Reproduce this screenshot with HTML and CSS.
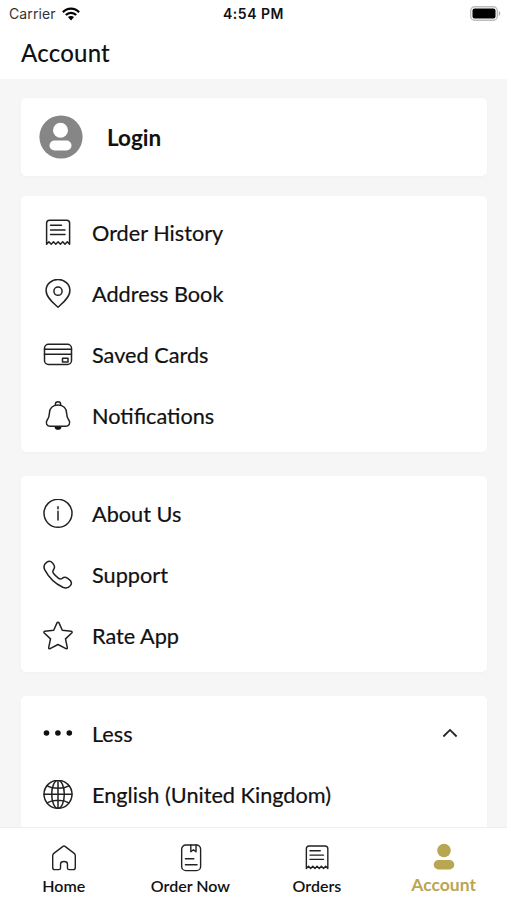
FILE: index.html
```html
<!DOCTYPE html>
<html lang="en">
<head>
<meta charset="utf-8">
<title>Account</title>
<link rel="stylesheet" href="styles.css">
</head>
<body>
<svg class="defs" width="0" height="0">
  <symbol id="receipt" viewBox="0 0 30 30">
    <path d="M3.600 26.200V5.200a3 3 0 0 1 3-3h17a3 3 0 0 1 3 3v21l-2.300-2.500-2.300 2.500-2.300-2.500-2.300 2.500-2.300-2.500-2.300 2.500-2.300-2.500-2.300 2.500-2.300-2.500z"/>
    <path d="M7.500 7.300h11M7.500 11.900h14.500M7.500 16.500h14.500"/>
  </symbol>
</svg>
<div class="screen">
  <header>
    <div class="status">
      <div class="carrier"><span>Carrier</span>
        <svg width="18" height="14" viewBox="0 0 18 14"><path fill="none" stroke="#000" stroke-width="2.2" d="M.9 5.2C5.4.5 12.6.5 17.1 5.2M3.8 8.1c2.9-3 7.5-3 10.4 0"/><path d="M5.9 10.1c1.7-1.6 4.5-1.6 6.2 0L9 13.500z"/></svg>
      </div>
      <div class="time">4:54 PM</div>
      <svg class="battery" width="31" height="15" viewBox="0 0 31 15"><rect x=".7" y=".7" width="26.6" height="13.6" rx="4" fill="#fff" stroke="#bbb" stroke-width="1.4"/><rect x="2.5" y="2.5" width="23" height="10" rx="2"/><path d="M28.8 5c2 1 2 4 0 5z" fill="#aaa"/></svg>
    </div>
    <h1>Account</h1>
  </header>
  <main>
    <section class="card login">
      <svg width="44" height="44" viewBox="0 0 44 44"><circle cx="22" cy="22" r="21.6" fill="#868686"/><g fill="#fff"><circle cx="21.5" cy="15.2" r="7.5"/><rect x="10.5" y="25.5" width="22" height="10" rx="5"/></g></svg>
      <span>Login</span>
    </section>
    <section class="card main-list">
      <div class="row"><svg class="icon"><use href="#receipt"/></svg><span>Order History</span></div>
      <div class="row"><svg class="icon" viewBox="0 0 30 30"><path d="M15 28.300C10 23.800 3.100 18.200 3.100 11.400a11.900 11 0 0 1 23.800 0C26.900 18.200 20 23.800 15 28.300z"/><circle cx="15" cy="12.200" r="4.100"/></svg><span>Address Book</span></div>
      <div class="row"><svg class="icon" viewBox="0 0 30 30"><rect x="1.500" y="4.300" width="27" height="20.200" rx="4"/><path d="M1.500 9.300h27M1.500 14.300h27M19.500 18.300h5.500v3.700h-5.500z"/></svg><span>Saved Cards</span></div>
      <div class="row"><svg class="icon" viewBox="0 0 30 30"><path d="M12.400 4.300V3.100c0-3 5.200-3 5.200 0v1.200"/><path d="M15 4c-5.400 0-8.500 3.500-8.600 8.300 0 3-.7 4.700-2.300 7-2.100 3 .1 6 3.200 6h15.400c3.100 0 5.300-3 3.200-6-1.600-2.300-2.300-4-2.300-7C23.500 7.500 20.400 4 15 4z"/><path class="solid" d="M11.500 26h7c-.3 3.800-6.700 3.800-7 0z"/></svg><span>Notifications</span></div>
    </section>
    <section class="card about-list">
      <div class="row"><svg class="icon" viewBox="0 0 30 30"><circle cx="15" cy="14.300" r="14"/><path d="M15 12.300v8.800M15 7.800v2"/></svg><span>About Us</span></div>
      <div class="row"><svg class="icon" viewBox="0 0 30 30"><path d="M3.600 2.300c2.300-1.700 4.500-1.100 5.900.6l1.200 1.700c1.200 1.800 1 3.500-.2 5.100-1 1.400-1 2.400.1 3.800 1.400 1.800 3 3.300 4.800 4.700 1.400 1.100 2.400 1.100 3.800.1 1.600-1.200 3.300-1.400 5.100-.2l2 1.500c2.200 1.700 2.800 4 1.100 6-1.900 2.500-4.700 2.900-7.600 1.700C12.600 23.900 5.700 17.300 1.800 9.900.4 7 .9 4.200 3.600 2.300z"/></svg><span>Support</span></div>
      <div class="row"><svg class="icon" viewBox="0 0 30 30"><path d="M14 1.900c.4-.9 1.600-.9 2 0l3.300 7.400 8.900 1c1 .2 1.200 1 .5 1.700l-6.200 5.900 1.800 8.800c.2.900-.6 1.400-1.400 1L15 23.500l-7.900 4.200c-.8.400-1.600-.1-1.400-1l1.800-8.800L1.300 12c-.7-.7-.5-1.500.5-1.700l8.900-1z"/></svg><span>Rate App</span></div>
    </section>
    <section class="card more-list">
      <div class="row"><svg class="icon" viewBox="0 0 30 30"><g class="solid"><circle cx="3.500" cy="14" r="2.800"/><circle cx="14.900" cy="14" r="2.800"/><circle cx="26.300" cy="14" r="2.800"/></g></svg><span>Less</span>
        <svg class="chevron" width="16" height="10" viewBox="0 0 16 10"><path d="M1.400 8.500 8 1.900l6.600 6.600"/></svg></div>
      <div class="row"><svg class="icon" viewBox="0 0 30 30"><circle cx="15" cy="14.300" r="14"/><ellipse cx="15" cy="14.300" rx="6.300" ry="14"/><path d="M15 .3v28M1 14.300h28M4 5.800c6 3.300 16 3.300 22 0M4 22.800c6-3.300 16-3.300 22 0"/></svg><span>English (United Kingdom)</span></div>
    </section>
  </main>
  <nav>
    <div class="tab"><svg class="icon" viewBox="0 0 30 30"><path d="M2.900 12.300c0-1 .4-1.700 1.200-2.300l9.800-7.500c.7-.5 1.500-.5 2.200 0l9.800 7.500c.8.600 1.200 1.300 1.200 2.300v12.800c0 1.600-.8 2.400-2.400 2.400h-4.200c-1.200 0-1.800-.6-1.800-1.800v-4.400c0-3.300-7.400-3.300-7.400 0v4.400c0 1.200-.6 1.800-1.800 1.800H5.300c-1.600 0-2.400-.8-2.400-2.400z"/></svg><span>Home</span></div>
    <div class="tab"><svg class="icon" viewBox="0 0 30 30"><rect x="5" y="1" width="20.300" height="27.500" rx="4.500"/><path d="M14.800 1v7.300l2.800-2.100 2.800 2.100V1M9 15.800h9M9 22.300h12.500"/></svg><span>Order Now</span></div>
    <div class="tab"><svg class="icon"><use href="#receipt"/></svg><span>Orders</span></div>
    <div class="tab active"><svg width="22" height="28" viewBox="0 0 22 28"><circle cx="11" cy="7.500" r="6.800"/><rect x=".7" y="17" width="20.600" height="9.500" rx="4.750"/></svg><span>Account</span></div>
  </nav>
</div>
</body>
</html>
```

FILE: styles.css
```css
* { box-sizing: border-box; }
body { margin: 0; font-family: Lato, sans-serif; color: #111; }
.defs { display: block; }
.screen { height: 900px; display: flex; flex-direction: column; overflow: hidden; background: #f6f6f6; }
header { height: 79px; flex: none; background: #fff; }
.status { height: 28px; padding: 0 6px 0 9px; display: grid; grid-template-columns: 1fr auto 1fr; align-items: center; font: 14px/28px Inter, sans-serif; }
.carrier { display: flex; align-items: center; gap: 6px; color: #333; letter-spacing: .12px; }
.carrier svg { margin-top: -1px; }
.time { font-weight: 600; font-size: 14px; letter-spacing: .5px; margin-right: 3px; }
.battery { justify-self: end; margin-top: -1px; }
h1 { margin: 8px 0 0 21px; font-size: 24px; line-height: 34px; font-weight: 500; letter-spacing: .2px; }
main { flex: 1; min-height: 0; overflow: hidden; padding: 19px 20px 0 21px; }
.card { background: #fff; border-radius: 5px; box-shadow: 0 1px 4px rgba(0,0,0,.025); }
.login { height: 78px; display: flex; align-items: center; padding-left: 18px; gap: 24px; font-size: 22.500px; font-weight: 700; margin-bottom: 20px; }
.row { height: 61px; padding: 0 29px 0 22px; display: flex; align-items: center; font-size: 21.700px; line-height: 26px; font-weight: 400; }
.row span { margin-left: 19px; flex: 1; -webkit-text-stroke: .2px #111; }
.icon { width: 30px; height: 30px; flex: none; fill: none; stroke: #222; stroke-width: 1.500; stroke-linejoin: round; stroke-linecap: round; }
.solid { fill: #111; stroke: none; }
.main-list { height: 256px; padding-top: 6px; margin-bottom: 24px; }
.about-list { height: 196px; padding-top: 7px; margin-bottom: 24px; }
.more-list { height: 140px; padding-top: 7px; }
.chevron { fill: none; stroke: #222; stroke-width: 1.800; margin-top: -1px; }
nav { height: 73px; flex: none; padding-left: 1px; display: grid; grid-template-columns: repeat(4, 126.600px); background: #fff; border-top: 1px solid #eee; }
.tab { display: flex; flex-direction: column; align-items: center; padding-top: 16px; font-size: 16px; line-height: 20px; font-weight: 600; }
.tab .icon { width: 28px; height: 28px; }
.tab span { margin: 4px 1px 0 0; }
.active { color: #b8a653; fill: #b8a653; font-size: 17.500px; font-weight: 700; padding-top: 15px; }
```
